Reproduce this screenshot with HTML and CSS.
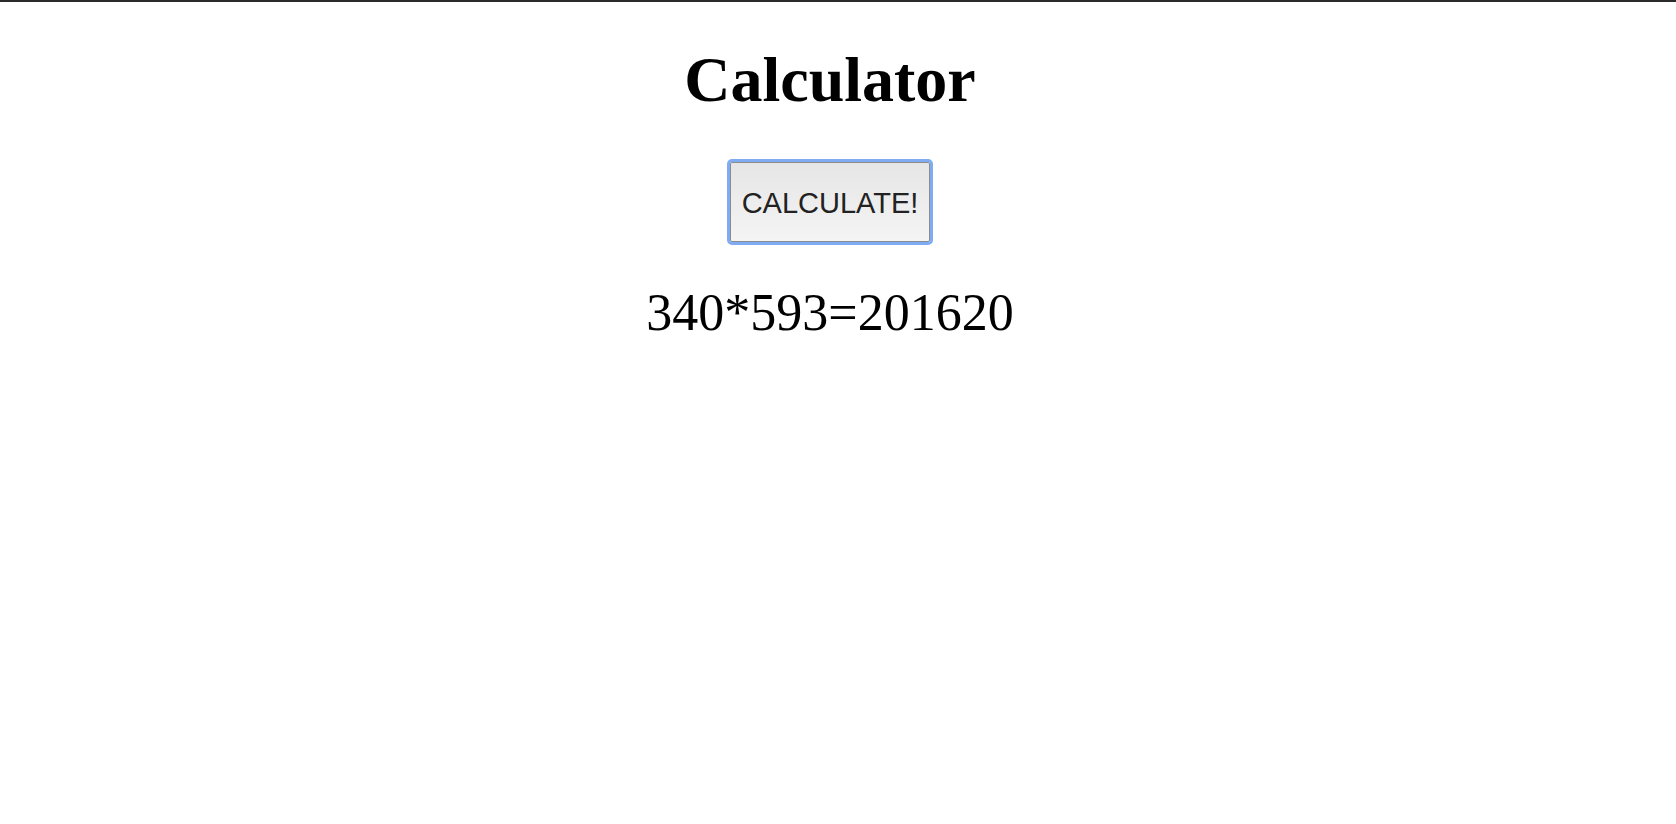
FILE: index.html
```html
<!DOCTYPE html>
<html lang="en">
<head>
<meta charset="utf-8">
<title>Calculator</title>
<link rel="stylesheet" href="styles.css">
</head>
<body>
<div class="topbar"></div>
<main class="page">
  <h1 class="title">Calculator</h1>
  <button class="calc-btn" type="button">CALCULATE!</button>
  <p class="result">340*593=201620</p>
</main>
</body>
</html>
```

FILE: styles.css
```css
html, body {
  margin: 0;
  padding: 0;
  background: #ffffff;
}

.topbar {
  height: 2px;
  background: #2b2b2b;
}

.page {
  display: flex;
  flex-direction: column;
  align-items: center;
  padding-right: 16px;
  font-family: "Liberation Serif", "Times New Roman", serif;
  color: #000;
}

.title {
  margin: 41px 0 0;
  font-size: 64px;
  font-weight: bold;
  line-height: normal;
}

.calc-btn {
  margin-top: 45px;
  padding: 3px 11px 0;
  height: 80px;
  font-family: "Liberation Sans", Arial, sans-serif;
  font-size: 29px;
  color: #222;
  background: linear-gradient(#e6e6e6, #f4f4f4);
  border: 1px solid #8c8c8c;
  border-radius: 2px;
  outline: 3px solid #7fabf3;
  outline-offset: 0;
}

.result {
  margin: 41px 0 0;
  font-size: 52px;
  line-height: normal;
}
```
